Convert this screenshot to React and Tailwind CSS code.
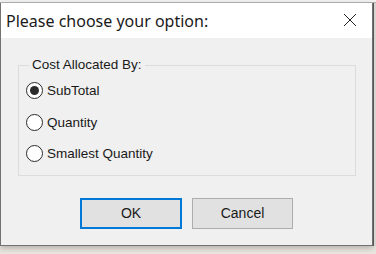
export default function App() {
  const font = { fontFamily: '"Liberation Sans", Arial, sans-serif' };
  const Radio = ({ checked, label }) => (
    <div className="flex items-center h-[31.5px]">
      <span className="w-[17px] h-[17px] rounded-full border border-[#2b2b2b] bg-white flex items-center justify-center">
        {checked && <span className="w-[9px] h-[9px] rounded-full bg-[#2b2b2b]" />}
      </span>
      <span className="ml-[4px] text-[13.5px] text-[#1a1a1a] leading-none">{label}</span>
    </div>
  );
  return (
    <div className="w-[376px] h-[254px] bg-[#ebe5df] overflow-hidden" style={font}>
      <div className="h-[3px] bg-[#f2f2f2] border-b border-[#b5b5b5]" />
      <div className="flex">
        <div className="w-[373px] h-[243px] border border-t-0 border-[#727272] flex flex-col shadow-[0_2px_6px_rgba(0,0,0,0.25)]">
          <div className="h-[35px] bg-white flex items-center justify-between pl-[5px] pr-[15px]">
            <span className="text-[16px] text-[#1a1a1a]" style={{ fontFamily: '"Noto Sans", "Open Sans", sans-serif' }}>
              Please choose your option:
            </span>
            <svg width="14" height="14" viewBox="0 0 14 14" className="mb-[1px]">
              <path d="M1 1 L13 13 M13 1 L1 13" stroke="#222" strokeWidth="1" fill="none" />
            </svg>
          </div>
          <div className="flex-1 bg-[#f0f0f0] flex flex-col">
            <fieldset className="ml-[17px] mt-[19px] w-[338px] h-[119px] border border-[#dcdcdc] pl-[7px]">
              <legend className="ml-[3px] px-[3px] text-[13.5px] text-[#1a1a1a] leading-[16px]">
                Cost Allocated By:
              </legend>
              <div className="flex flex-col mt-[2px]">
                <Radio checked label="SubTotal" />
                <Radio label="Quantity" />
                <Radio label="Smallest Quantity" />
              </div>
            </fieldset>
            <div className="flex justify-center gap-[10px] mt-[22px]">
              <button className="w-[102px] h-[31px] bg-[#e1e1e1] border-2 border-[#0078d7] text-[14px] text-[#1a1a1a]">
                OK
              </button>
              <button className="w-[101px] h-[31px] bg-[#e1e1e1] border border-[#adadad] text-[14px] text-[#1a1a1a]">
                Cancel
              </button>
            </div>
          </div>
        </div>
        <div className="w-[3px] h-[243px] bg-[#d9d4cf] border-l border-[#555555]" />
      </div>
    </div>
  );
}
